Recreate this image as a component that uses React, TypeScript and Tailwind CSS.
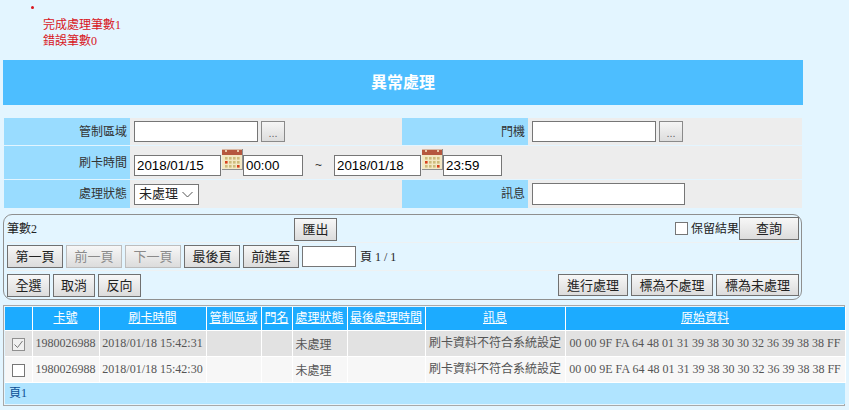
import React from "react";

const cjk = "font-['Arial','Liberation_Sans','Noto_Sans_CJK_TC',sans-serif]";
const serif = "font-['Liberation_Serif','Noto_Sans_CJK_TC',serif]";

function Btn({ w, h = "h-[23px]", disabled, children, className = "" }: { w: string; h?: string; disabled?: boolean; children: React.ReactNode; className?: string }) {
  return (
    <button
      disabled={disabled}
      className={`${w} ${h} shrink-0 border border-solid ${disabled ? "border-[#bdbdbd] text-[#8a8a8a]" : "border-[#707070] text-[#222]"} bg-gradient-to-b from-[#f7f7f7] to-[#dcdcdc] text-[13px] leading-none flex items-center justify-center ${className}`}
    >
      {children}
    </button>
  );
}

function Field({ w, value = "", h = "h-[21px]" }: { w: string; value?: string; h?: string }) {
  return (
    <div className={`${w} ${h} shrink-0 border border-solid border-[#767676] bg-white text-[13.33px] leading-none text-black pl-[2px] flex items-center font-['Liberation_Sans',sans-serif]`}>
      {value}
    </div>
  );
}

function Dots() {
  return (
    <button className="w-[24px] h-[21px] ml-[3px] shrink-0 border border-solid border-[#8a8a8a] bg-gradient-to-b from-[#f5f5f5] to-[#dddddd] text-[11px] leading-none text-[#666] flex items-center justify-center pt-[3px]">
      ...
    </button>
  );
}

function Calendar() {
  return (
    <svg width="21" height="21" viewBox="0 0 21 21" className="shrink-0 block">
      <rect x="0" y="0" width="21" height="21" fill="#8f8f8f" />
      <rect x="0" y="0" width="20" height="20" fill="#f3e8c4" />
      <rect x="0" y="1" width="20" height="5" fill="#b5573f" />
      <rect x="0" y="0" width="20" height="1" fill="#d9b9a6" />
      <rect x="3" y="1" width="2" height="2" fill="#e8c8a8" />
      <rect x="15" y="1" width="2" height="2" fill="#e8c8a8" />
      {[3, 7, 11, 15].map((x) =>
        [8, 12, 16].map((y) => (
          <rect key={`${x}-${y}`} x={x} y={y} width="2.6" height="2.6" fill={(x === 3 && y === 12) || (x === 15 && y === 16) ? "#d8401c" : "#cdbb7c"} />
        ))
      )}
    </svg>
  );
}

function Label({ children }: { children: React.ReactNode }) {
  return <div className="w-[126px] shrink-0 bg-[#99dcff] pr-[3px] text-[12px] text-[#333] flex items-center justify-end">{children}</div>;
}

const headers = ["", "卡號", "刷卡時間", "管制區域", "門名", "處理狀態", "最後處理時間", "訊息", "原始資料"];
const widths = ["w-[27px]", "w-[67px]", "w-[107px]", "w-[55px]", "w-[31px]", "w-[55px]", "w-[78px]", "w-[140px]", "w-[280px]"];

function Row({ bg, checked, time, raw }: { bg: string; checked?: boolean; time: string; raw: string }) {
  const cell = "border-r border-b border-solid border-white align-middle px-[1px] whitespace-nowrap overflow-hidden";
  return (
    <tr className={`${bg} h-[26px] text-[12px] text-[#555]`}>
      <td className={`${cell} text-center`}>
        <span className={`inline-flex w-[13px] h-[13px] border border-solid items-center justify-center align-middle ${checked ? "border-[#8f8f8f] bg-[#f0f0f0]" : "border-[#767676] bg-white"}`}>
          {checked && (
            <svg width="11" height="11" viewBox="0 0 11 11">
              <path d="M1.5 5.5 L4.5 8.5 L9.5 2" fill="none" stroke="#777" strokeWidth="1" />
            </svg>
          )}
        </span>
      </td>
      <td className={`${cell} pl-[3px]`}>1980026988</td>
      <td className={`${cell} text-center`}>{time}</td>
      <td className={cell}></td>
      <td className={cell}></td>
      <td className={`${cell} pl-[3px]`}><span className="relative top-[2px]">未處理</span></td>
      <td className={cell}></td>
      <td className={`${cell} text-center`}>刷卡資料不符合系統設定</td>
      <td className={`${cell} text-center`}>{raw}</td>
    </tr>
  );
}

export default function App() {
  return (
    <div className={`w-[849px] h-[410px] overflow-hidden bg-[#e3f5ff] relative ${cjk}`}>
      <div className={`h-[60px] pl-[43px] pt-[17px] text-[12px] leading-[16px] text-[#d8141c] ${serif}`}>
        <div className="relative">
          <span className="absolute left-[-12px] top-[-11px] w-[3px] h-[3px] rounded-full bg-[#d8141c]" />
          <div>完成處理筆數1</div>
          <div>錯誤筆數0</div>
        </div>
      </div>

      <div className="ml-[3px] w-[800px] h-[45px] bg-[#4dbeff] flex items-center justify-center text-[16px] font-bold text-white">
        異常處理
      </div>

      <div className="ml-[4px] mt-[13px] w-[798px] flex flex-col gap-[1px]">
        <div className="h-[27px] flex bg-[#ededed]">
          <Label>管制區域</Label>
          <div className="w-[272px] flex items-center pl-[4px]">
            <Field w="w-[124px]" />
            <Dots />
          </div>
          <Label>門機</Label>
          <div className="flex items-center pl-[4px]">
            <Field w="w-[124px]" />
            <Dots />
          </div>
        </div>
        <div className="h-[33px] flex bg-[#ededed]">
          <Label>刷卡時間</Label>
          <div className="flex items-start pl-[4px] pt-[9px]">
            <Field w="w-[87px]" value="2018/01/15" />
            <div className="-mt-[6px] ml-px"><Calendar /></div>
            <Field w="w-[60px]" value="00:00" />
            <div className="w-[31px] text-center text-[12px] leading-[21px] text-[#333]">~</div>
            <Field w="w-[87px]" value="2018/01/18" />
            <div className="-mt-[6px] ml-px"><Calendar /></div>
            <Field w="w-[59px]" value="23:59" />
          </div>
        </div>
        <div className="h-[28px] flex bg-[#ededed]">
          <Label>處理狀態</Label>
          <div className="w-[272px] flex items-center pl-[4px]">
            <div className="w-[65px] h-[21px] border border-solid border-[#767676] bg-white text-[13px] text-[#222] pl-[4px] flex items-center justify-between pr-[5px]">
              <span>未處理</span>
              <svg width="11" height="7" viewBox="0 0 11 7"><path d="M0.5 1 L5.5 6 L10.5 1" fill="none" stroke="#555" strokeWidth="1" /></svg>
            </div>
          </div>
          <Label>訊息</Label>
          <div className="flex items-center pl-[4px]">
            <Field w="w-[153px]" h="h-[22px]" />
          </div>
        </div>
      </div>

      <div className="ml-[3px] mt-[6px] w-[799px] h-[86px] border border-solid border-[#8f8f8f] rounded-[9px] flex flex-col text-[12px] text-[#222] px-[3px]">
        <div className="h-[28px] flex items-center border-b border-solid border-[#eef1f2] relative">
          <span className={serif}>筆數2</span>
          <Btn w="w-[43px]" className="absolute left-[287px] top-[3px]">匯出</Btn>
          <div className="ml-auto flex items-center mr-[-1px]">
            <span className="w-[13px] h-[13px] border border-solid border-[#767676] bg-white mr-[3px]" />
            <span>保留結果</span>
            <Btn w="w-[60px]">查詢</Btn>
          </div>
        </div>
        <div className="h-[28px] flex items-center gap-[3px] border-b border-solid border-[#eef1f2]">
          <Btn w="w-[56px]">第一頁</Btn>
          <Btn w="w-[56px]" disabled>前一頁</Btn>
          <Btn w="w-[56px]" disabled>下一頁</Btn>
          <Btn w="w-[56px]">最後頁</Btn>
          <Btn w="w-[56px]">前進至</Btn>
          <Field w="w-[54px]" />
          <span className={`ml-[1px] ${serif}`}>頁 1 / 1</span>
        </div>
        <div className="flex-1 flex items-center gap-[3px]">
          <Btn w="w-[43px]">全選</Btn>
          <Btn w="w-[42px]">取消</Btn>
          <Btn w="w-[43px]">反向</Btn>
          <div className="ml-auto flex gap-[3px] mr-[-1px]">
            <Btn w="w-[70px]" h="h-[22px]">進行處理</Btn>
            <Btn w="w-[82px]" h="h-[22px]">標為不處理</Btn>
            <Btn w="w-[83px]" h="h-[22px]">標為未處理</Btn>
          </div>
        </div>
      </div>

      <div className="ml-[3px] mt-[5px] w-[842px] border border-solid border-[#a8a8a8] p-px">
        <table className={`w-[840px] table-fixed border-collapse ${serif}`}>
          <colgroup>
            {widths.map((w, i) => <col key={i} className={w} />)}
          </colgroup>
          <thead>
            <tr className="h-[23px] bg-[#1cabff] text-[12px] text-white">
              {headers.map((h, i) => (
                <th key={i} className="font-normal underline text-center border-r border-b border-solid border-white whitespace-nowrap overflow-hidden p-0">{h}</th>
              ))}
            </tr>
          </thead>
          <tbody>
            <Row bg="bg-[#e2e2e2]" checked time="2018/01/18 15:42:31" raw="00 00 9F FA 64 48 01 31 39 38 30 30 32 36 39 38 38 FF" />
            <Row bg="bg-[#f7f7f7]" time="2018/01/18 15:42:30" raw="00 00 9E FA 64 48 01 31 39 38 30 30 32 36 39 38 38 FF" />
            <tr className="h-[22px] bg-[#b0e4ff] text-[12px] text-[#0a4f96]">
              <td colSpan={9} className="pl-[4px]">頁1</td>
            </tr>
          </tbody>
        </table>
      </div>
    </div>
  );
}
